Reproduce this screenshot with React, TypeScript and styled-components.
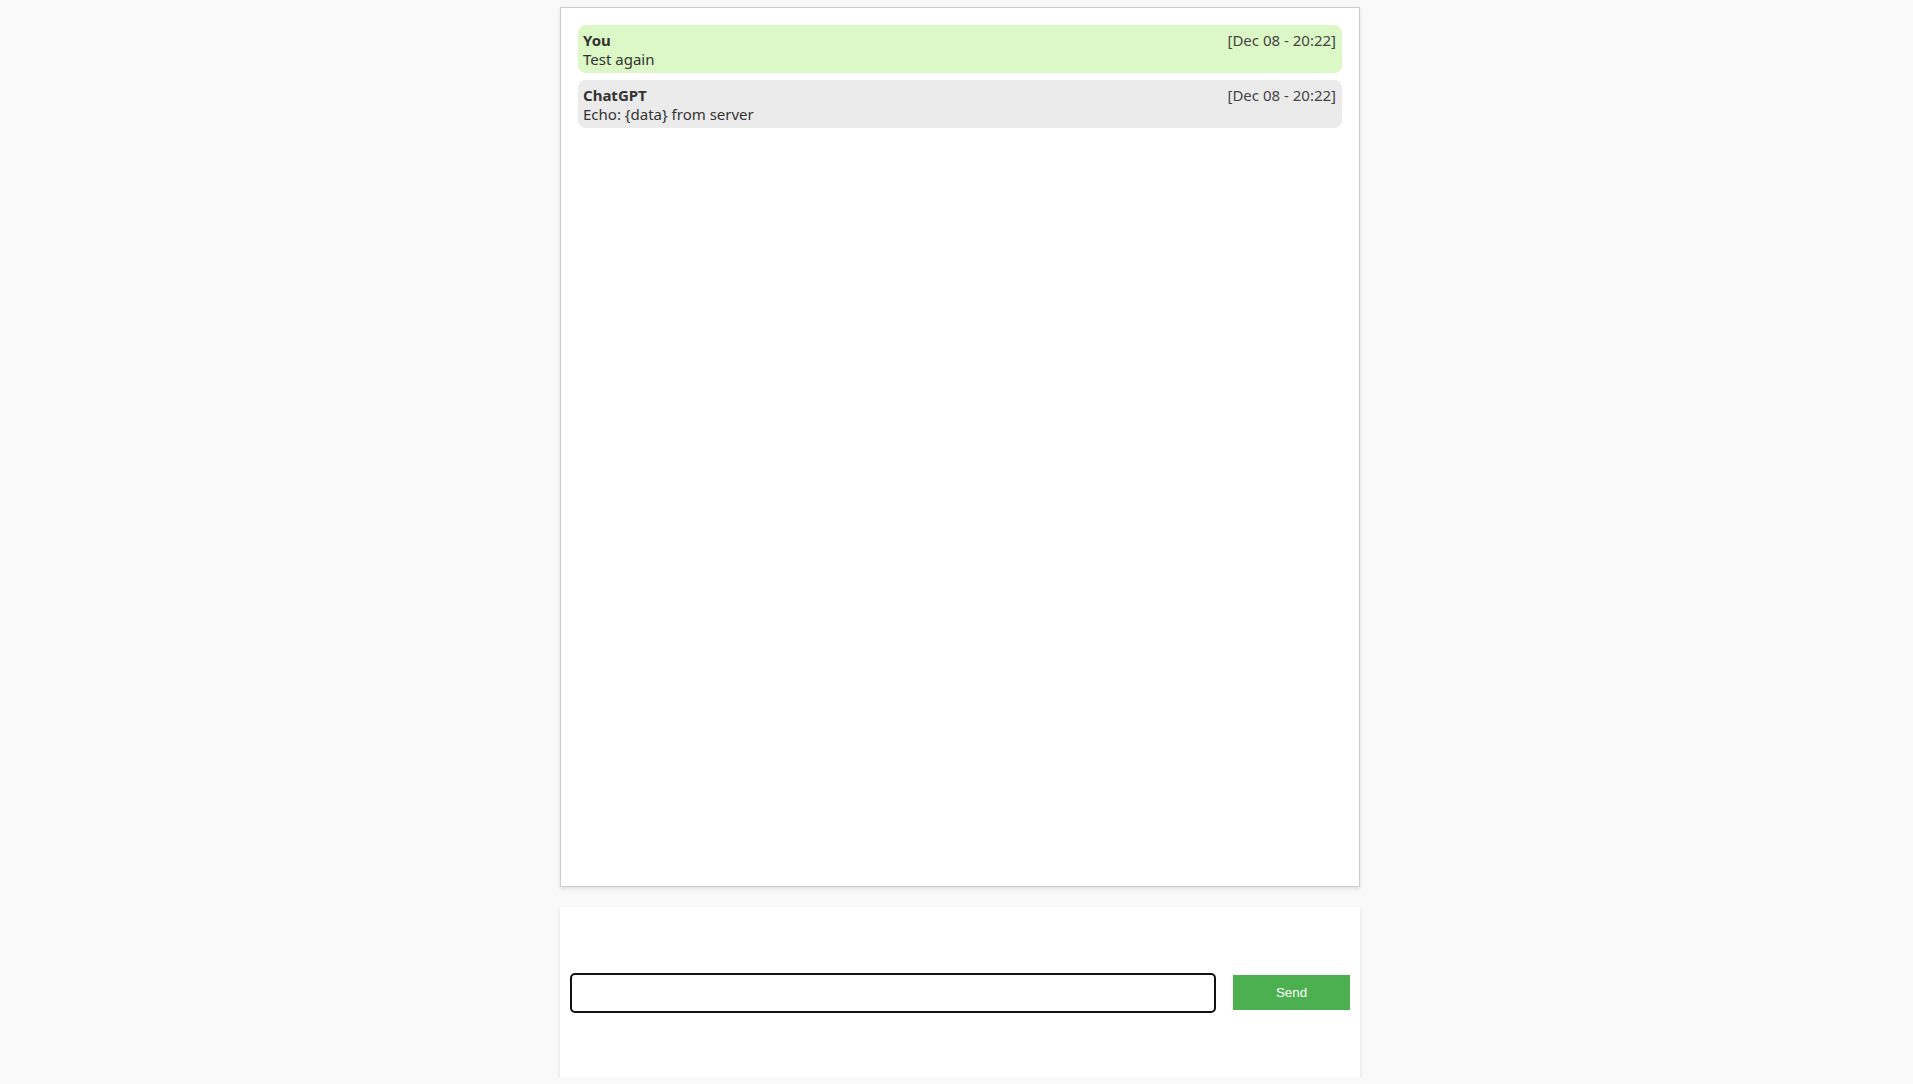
import React, { useState } from "react";
import styled, { createGlobalStyle } from "styled-components";

const GlobalStyle = createGlobalStyle`
  html, body {
    margin: 0;
    padding: 0;
    background: #f9f9f9;
    font-family: "Noto Sans", "Open Sans", sans-serif;
  }
`;

const Page = styled.div`
  display: flex;
  flex-direction: column;
  align-items: center;
  gap: 20px;
  padding: 7px 0 0 7px;
`;

const ChatWindow = styled.div`
  box-sizing: border-box;
  width: 800px;
  height: 880px;
  background: #ffffff;
  border: 1px solid #cccccc;
  box-shadow: 0 2px 4px rgba(0, 0, 0, 0.1);
  padding: 17px 17px;
  display: flex;
  flex-direction: column;
  gap: 7px;
  overflow-y: auto;
`;

const Bubble = styled.div<{ $mine: boolean }>`
  background: ${(p) => (p.$mine ? "#dcf8c6" : "#ebebeb")};
  border-radius: 8px;
  padding: 6px 6px 4px 5px;
  color: #333333;
  font-size: 15px;
  line-height: 19px;
`;

const BubbleHead = styled.div`
  display: flex;
  justify-content: space-between;
  align-items: baseline;
`;

const Sender = styled.span`
  font-weight: 700;
  color: #333333;
`;

const Time = styled.span`
  color: #444444;
`;

const Composer = styled.div`
  box-sizing: border-box;
  width: 800px;
  height: 171px;
  background: #ffffff;
  box-shadow: 0 2px 4px rgba(0, 0, 0, 0.1);
  padding: 0 10px;
  display: flex;
  align-items: center;
  gap: 17px;
`;

const Input = styled.input`
  box-sizing: border-box;
  width: 646px;
  height: 40px;
  border: 2px solid #111111;
  border-radius: 5px;
  padding: 0 8px;
  font-size: 14px;
  font-family: "Liberation Sans", Arial, sans-serif;
  outline: none;
  background: #fff;
  caret-color: #000;
`;

const SendButton = styled.button`
  box-sizing: border-box;
  width: 117px;
  height: 35px;
  border: none;
  background: #4caf50;
  color: #ffffff;
  font-family: "Liberation Sans", Arial, sans-serif;
  font-size: 13.33px;
  cursor: pointer;
  padding: 0;
`;

type Msg = { sender: string; text: string; time: string; mine: boolean };

const messages: Msg[] = [
  { sender: "You", text: "Test again", time: "[Dec 08 - 20:22]", mine: true },
  { sender: "ChatGPT", text: "Echo: {data} from server", time: "[Dec 08 - 20:22]", mine: false },
];

export default function App() {
  const [value, setValue] = useState("");
  return (
    <>
      <GlobalStyle />
      <Page>
        <ChatWindow>
          {messages.map((m, i) => (
            <Bubble key={i} $mine={m.mine}>
              <BubbleHead>
                <Sender>{m.sender}</Sender>
                <Time>{m.time}</Time>
              </BubbleHead>
              <div>{m.text}</div>
            </Bubble>
          ))}
        </ChatWindow>
        <Composer>
          <Input autoFocus value={value} onChange={(e) => setValue(e.target.value)} />
          <SendButton>Send</SendButton>
        </Composer>
      </Page>
    </>
  );
}
